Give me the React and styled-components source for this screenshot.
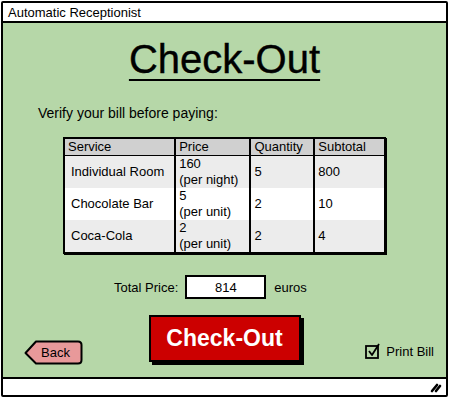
import React from "react";
import styled, { createGlobalStyle } from "styled-components";

const GlobalStyle = createGlobalStyle`
  html, body {
    margin: 0;
    padding: 0;
    background: #ffffff;
  }
  body {
    font-family: "Liberation Sans", Arial, sans-serif;
    color: #000;
  }
`;

const Page = styled.div`
  width: 450px;
  height: 400px;
  padding: 1px 0 0 1px;
  box-sizing: border-box;
`;

const Window = styled.div`
  width: 447px;
  height: 396px;
  box-sizing: border-box;
  border: 2px solid #000;
  border-radius: 2px;
  display: flex;
  flex-direction: column;
  overflow: hidden;
`;

const TitleBar = styled.div`
  height: 20px;
  box-sizing: border-box;
  border-bottom: 2px solid #000;
  background: #fff;
  font-size: 13px;
  line-height: 19px;
  padding-left: 5px;
`;

const Body = styled.div`
  flex: 1;
  background: #b6d7a8;
  display: flex;
  flex-direction: column;
`;

const Heading = styled.h1`
  margin: 13px 0 0;
  align-self: center;
  font-size: 40px;
  line-height: 46px;
  font-weight: 400;
  -webkit-text-stroke: 0.4px #000;
  text-decoration: underline;
  text-decoration-thickness: 2px;
  text-underline-offset: 6px;
`;

const Instruction = styled.p`
  margin: 23px 0 0 35px;
  font-size: 14px;
  line-height: 17px;
`;

const Bill = styled.table`
  margin: 15px 0 0 60px;
  width: 323px;
  border-collapse: collapse;
  border: 2px solid #000;
  font-size: 13px;
  line-height: 16px;
  box-shadow: 1px 1px 0 #000;
`;

const HeadCell = styled.th`
  background: #d0d0d0;
  font-weight: 400;
  text-align: left;
  padding: 0 3px;
  height: 16px;
  border-left: 2px solid #000;
  border-bottom: 1px solid #000;
  &:first-child { border-left: none; }
`;

const Row = styled.tr`
  background: ${(p) => (p.$shade ? "#ececec" : "#ffffff")};
`;

const Cell = styled.td`
  padding: 0 3px;
  height: 32px;
  vertical-align: middle;
  border-left: 2px solid #000;
  &:first-child {
    border-left: none;
    padding-left: 6px;
  }
`;

const TotalRow = styled.div`
  margin: 21px 0 0 111px;
  display: flex;
  align-items: center;
  gap: 7px;
  font-size: 13px;
`;

const TotalBox = styled.div`
  width: 81px;
  height: 24px;
  box-sizing: border-box;
  border: 2px solid #000;
  background: #fff;
  display: flex;
  align-items: center;
  justify-content: center;
  margin-right: 1px;
`;

const Actions = styled.div`
  margin-top: 16px;
  display: grid;
  grid-template-columns: 1fr auto 1fr;
  align-items: start;
`;

const BackButton = styled.button`
  position: relative;
  justify-self: start;
  margin: 25px 0 0 21px;
  width: 59px;
  height: 25px;
  padding: 0 0 0 4px;
  border: none;
  background: none;
  font-family: inherit;
  font-size: 13px;
  color: #000;
  svg {
    position: absolute;
    left: 0;
    top: 0;
  }
  span {
    position: relative;
  }
`;

const CheckoutButton = styled.button`
  width: 152px;
  height: 47px;
  box-sizing: border-box;
  border: 2px solid #000;
  background: #cc0000;
  color: #fff;
  font-family: inherit;
  font-size: 23px;
  font-weight: 700;
  box-shadow: 3px 3px 0 #000;
  padding: 0;
`;

const PrintOption = styled.label`
  justify-self: end;
  margin: 28px 12px 0 0;
  display: flex;
  align-items: center;
  gap: 5px;
  font-size: 13px;
`;

const StatusBar = styled.div`
  height: 18px;
  box-sizing: border-box;
  border-top: 2px solid #000;
  background: #fff;
  display: flex;
  justify-content: flex-end;
  align-items: center;
  padding-right: 4px;
`;

const items = [
  { service: "Individual Room", price: "160", unit: "(per night)", qty: "5", subtotal: "800" },
  { service: "Chocolate Bar", price: "5", unit: "(per unit)", qty: "2", subtotal: "10" },
  { service: "Coca-Cola", price: "2", unit: "(per unit)", qty: "2", subtotal: "4" },
];

const BackShape = () => (
  <svg width="59" height="25" viewBox="0 0 59 25">
    <path
      d="M12 1.5 H54 Q57.5 1.5 57.5 5 V20 Q57.5 23.5 54 23.5 H12 L1.5 13 Z"
      fill="#e8999a"
      stroke="#000"
      strokeWidth="2"
      strokeLinejoin="round"
    />
  </svg>
);

const CheckIcon = () => (
  <svg width="16" height="16" viewBox="0 0 16 16">
    <rect x="1" y="3" width="12" height="12" fill="none" stroke="#000" strokeWidth="1.8" />
    <path d="M4 8 L7 12 L14 1" fill="none" stroke="#000" strokeWidth="1.8" strokeLinejoin="round" />
  </svg>
);

const Grip = () => (
  <svg width="12" height="12" viewBox="0 0 12 12">
    <path d="M2 10 L7 4 M6 10 L10 5" stroke="#000" strokeWidth="2.6" strokeLinecap="round" />
  </svg>
);

export default function App() {
  return (
    <Page>
      <GlobalStyle />
      <Window>
        <TitleBar>Automatic Receptionist</TitleBar>
        <Body>
          <Heading>Check-Out</Heading>
          <Instruction>Verify your bill before paying:</Instruction>
          <Bill>
            <colgroup>
              <col style={{ width: 112 }} />
              <col style={{ width: 76 }} />
              <col style={{ width: 64 }} />
              <col style={{ width: 71 }} />
            </colgroup>
            <thead>
              <tr>
                <HeadCell>Service</HeadCell>
                <HeadCell>Price</HeadCell>
                <HeadCell>Quantity</HeadCell>
                <HeadCell>Subtotal</HeadCell>
              </tr>
            </thead>
            <tbody>
              {items.map((it, i) => (
                <Row key={it.service} $shade={i !== 1}>
                  <Cell>{it.service}</Cell>
                  <Cell>
                    {it.price}
                    <br />
                    {it.unit}
                  </Cell>
                  <Cell>{it.qty}</Cell>
                  <Cell>{it.subtotal}</Cell>
                </Row>
              ))}
            </tbody>
          </Bill>
          <TotalRow>
            <span>Total Price:</span>
            <TotalBox>814</TotalBox>
            <span>euros</span>
          </TotalRow>
          <Actions>
            <BackButton>
              <BackShape />
              <span>Back</span>
            </BackButton>
            <CheckoutButton>Check-Out</CheckoutButton>
            <PrintOption>
              <CheckIcon />
              Print Bill
            </PrintOption>
          </Actions>
        </Body>
        <StatusBar>
          <Grip />
        </StatusBar>
      </Window>
    </Page>
  );
}
